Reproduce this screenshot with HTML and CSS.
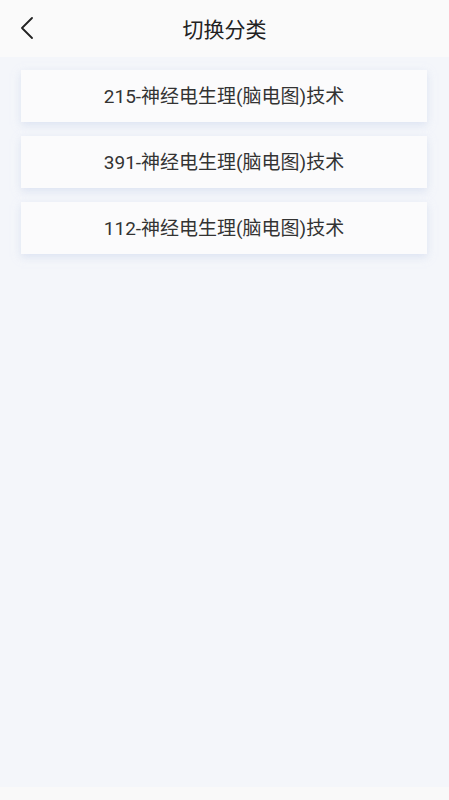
FILE: index.html
```html
<!DOCTYPE html>
<html lang="zh">
<head>
<meta charset="utf-8">
<link rel="stylesheet" href="styles.css">
</head>
<body>
<div class="page">
  <header class="header">
    <span class="back">
      <svg width="14" height="22" viewBox="0 0 14 22"><path d="M12 1 L2 11 L12 21" fill="none" stroke="#222" stroke-width="1.8" stroke-linecap="round" stroke-linejoin="round"/></svg>
    </span>
    <h1 class="title">切换分类</h1>
  </header>
  <main class="list">
    <div class="card">215-神经电生理(脑电图)技术</div>
    <div class="card">391-神经电生理(脑电图)技术</div>
    <div class="card">112-神经电生理(脑电图)技术</div>
  </main>
  <div class="bottom"></div>
</div>
</body>
</html>
```
FILE: styles.css
```css
html, body { margin: 0; padding: 0; }
body {
  width: 449px; height: 800px; overflow: hidden;
  background: #f4f6fa;
  font-family: Roboto, "Noto Sans CJK SC", sans-serif;
  color: #333;
}
.page { display: flex; flex-direction: column; height: 800px; }
.header {
  height: 57px; flex: none; background: #fafafa;
  position: relative; display: flex; align-items: center; justify-content: center;
}
.back { position: absolute; left: 20px; top: 17px; display: flex; }
.title { margin: 0 0 2px; font-size: 21px; font-weight: 400; color: #222; }
.list {
  flex: 1; display: flex; flex-direction: column; gap: 14px;
  padding: 13px 22px 0 21px;
}
.card {
  height: 52px; box-sizing: border-box; padding-bottom: 4px; background: #fbfbfc;
  display: flex; align-items: center; justify-content: center;
  font-size: 19px; color: #333;
  box-shadow: 0 3px 8px rgba(200, 212, 235, 0.55);
}
.bottom { height: 13px; flex: none; background: #f9f9f9; }
```
